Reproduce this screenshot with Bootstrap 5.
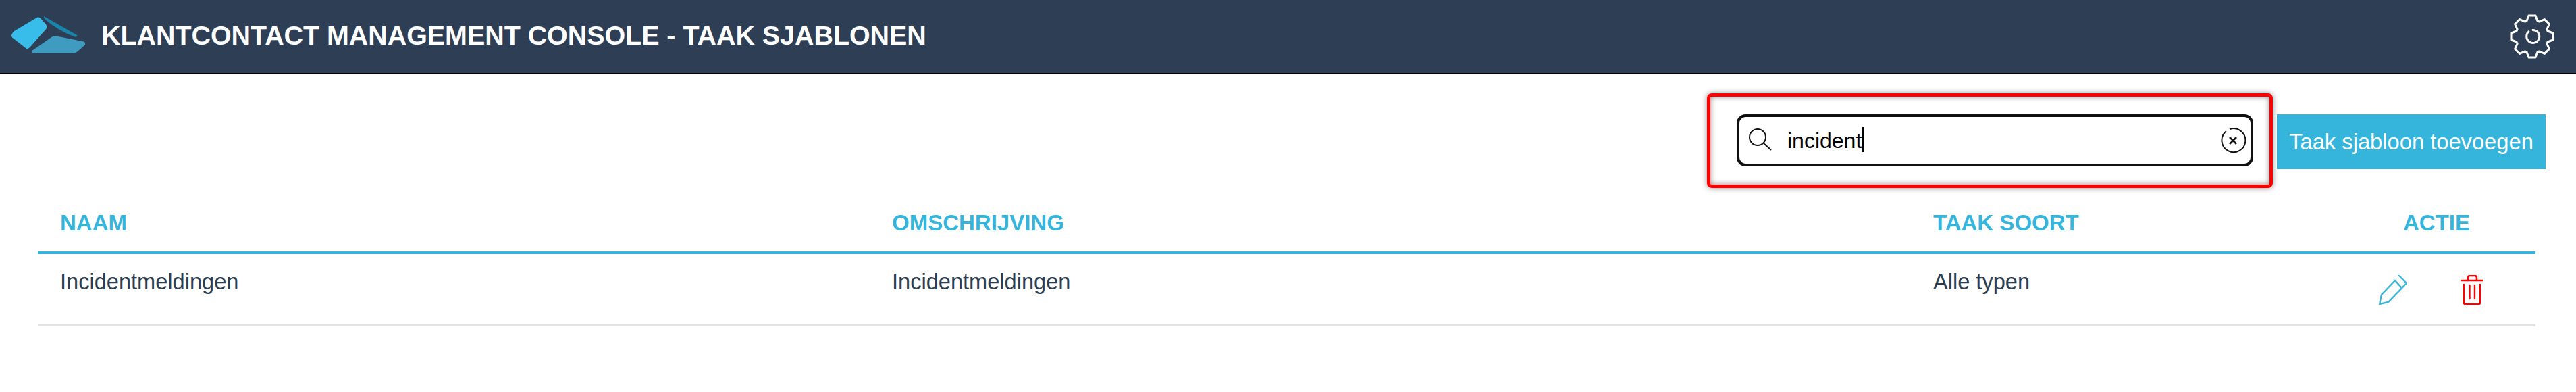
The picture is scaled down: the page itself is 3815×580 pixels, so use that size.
<!DOCTYPE html>
<html lang="nl">
<head>
    <meta charset="UTF-8">
    <meta name="viewport" content="width=device-width, initial-scale=1.0">
    <title>Taak sjablonen</title>
    <link href="https://cdn.jsdelivr.net/npm/bootstrap@5.3.0/dist/css/bootstrap.min.css" rel="stylesheet">
    <style>
        body { font-family: "Liberation Sans", Arial, sans-serif; font-size: 32px; color: #2c3e50; background: #fff; }
        .top-bar { height: 110px; background: #2d3e55; border-bottom: 2px solid #000; padding: 0 32px 0 17px; }
        .top-logo { width: 110px; height: 55px; margin-top: -6px; }
        .top-title { font-size: 39.4px; font-weight: 700; color: #fff; margin: -2px 0 0 23px; line-height: 1; }
        .top-gear { width: 66px; height: 66px; }
        .tools { padding: 28px 45px 0 0; }
        .search-mark { border: 5px solid #f00; border-radius: 7px; padding: 26px 24px 27px 39px; box-shadow: 0 0 8px rgba(0, 0, 0, .45), inset 0 0 8px rgba(0, 0, 0, .45); }
        .search-box { width: 765px; height: 77px; border: 4px solid #111; border-radius: 13px; padding: 0 7px 0 14px; background: #fff; }
        .search-input { width: 100%; border: 0; outline: 0; padding: 0; margin-left: 21px; font-size: 32px; color: #000; background: transparent; }
        .search-caret { position: absolute; left: 182px; top: 15px; width: 2px; height: 37px; background: #000; }
        .add-btn { width: 398px; height: 81px; margin: 31px 0 0 6px; padding: 0; border: 0; border-radius: 0; background: #36b5dc; color: #fff; font-size: 32.7px; }
        .add-btn:hover { background: #36b5dc; color: #fff; }
        .task-wrap { padding: 0 60px 0 56px; margin-top: 33px; }
        .task-table { table-layout: fixed; width: 3699px; margin: 0; }
        .task-table th { padding: 0 34px 24px 33px; font-size: 33px; font-weight: 700; line-height: 37px; color: #36b5dc; text-transform: uppercase; border-bottom: 4px solid #36b5dc; }
        .task-table td { height: 107px; padding: 22px 34px 0 33px; font-size: 32.6px; line-height: 37px; color: #2c3e50; vertical-align: top; border-bottom: 3px solid #e3e3e3; }
        .col-name { width: 1232px; }
        .col-desc { width: 1542px; }
        .col-kind { width: 633px; }
        .col-action { width: 292px; }
        .task-table .act-cell { padding: 31px 0 0; }
        .act-icons { gap: 79px; padding-left: 60px; }
        .act-pencil { width: 42px; height: 44px; }
        .act-trash { width: 34px; height: 45px; }
    </style>
</head>
<body>
    <nav class="top-bar d-flex align-items-center">
        <svg class="top-logo flex-shrink-0" viewBox="0 0 110 55">
            <path fill="#38bdeb" d="M38 1.7Q40 1 42.3 2.3L51 12Q53 15 51.3 19L28 45Q25 49 22.3 48L1.3 31.7Q-.7 29 .3 27.3Q1.5 24.5 3.7 22.3Z"/>
            <path fill="#1a85ab" d="M48 0L97 28Q98.5 30 94.7 30.7Q70 22 51 5.7Q47 2 48 0Z"/>
            <path fill="#3f9bc0" d="M64.7 29L107 37.5Q110 39 109 42.3L98 52Q95 54.7 91.3 54.7L33 54.7Q29.5 53.5 30.7 50.7L59.7 30.7Q62 29 64.7 29Z"/>
        </svg>
        <h1 class="top-title">KLANTCONTACT MANAGEMENT CONSOLE - TAAK SJABLONEN</h1>
        <svg class="top-gear ms-auto" viewBox="0 0 66 66" fill="none" stroke="#fff" stroke-width="3" stroke-linejoin="round">
            <path d="M25 10L28 2H38L41 10L43.6 11.1L51.4 7.6L58.4 14.6L54.9 22.4L56 25L64 28V38L56 41L54.9 43.6L58.4 51.4L51.4 58.4L43.6 54.9L41 56L38 64H28L25 56L22.4 54.9L14.6 58.4L7.6 51.4L11.1 43.6L10 41L2 38V28L10 25L11.1 22.4L7.6 14.6L14.6 7.6L22.4 11.1Z"/>
            <path d="M29 25A9.5 9.5 0 1 0 33 23.5"/>
        </svg>
    </nav>

    <div class="tools d-flex justify-content-end align-items-start">
        <div class="search-mark">
            <div class="search-box d-flex align-items-center position-relative">
                <svg class="flex-shrink-0" width="36" height="36" viewBox="0 0 36 36" fill="none" stroke="#111" stroke-width="2">
                    <circle cx="13" cy="13" r="12"/>
                    <path d="M22 22L33 32"/>
                </svg>
                <input class="search-input" type="text" value="incident" aria-label="Zoeken">
                <span class="search-caret"></span>
                <svg class="flex-shrink-0" width="38" height="38" viewBox="0 0 38 38" fill="none" stroke="#111">
                    <path stroke-width="2" d="M9 5A17.5 17.5 0 1 0 14 2.2"/>
                    <path stroke-width="2.6" d="M14 14L24 24M24 14L14 24"/>
                </svg>
            </div>
        </div>
        <button class="btn add-btn" type="button">Taak sjabloon toevoegen</button>
    </div>

    <div class="task-wrap">
        <table class="table task-table">
            <thead>
                <tr>
                    <th class="col-name">Naam</th>
                    <th class="col-desc">Omschrijving</th>
                    <th class="col-kind">Taak soort</th>
                    <th class="col-action text-center">Actie</th>
                </tr>
            </thead>
            <tbody>
                <tr>
                    <td>Incidentmeldingen</td>
                    <td>Incidentmeldingen</td>
                    <td>Alle typen</td>
                    <td class="act-cell">
                        <div class="act-icons d-flex">
                            <svg class="act-pencil" viewBox="0 0 42 44" fill="none" stroke="#36b5dc" stroke-width="2.4" stroke-linejoin="round" stroke-linecap="round">
                                <path d="M24 8L4 29L1 43L14 40L41 12L30 1"/>
                                <path d="M24 8L34 19"/>
                            </svg>
                            <svg class="act-trash" viewBox="0 0 34 45" fill="none" stroke="#f00" stroke-width="2.4" stroke-linejoin="round" stroke-linecap="round">
                                <path d="M1 8H33"/>
                                <path d="M5 14V41Q5 43 7 43H27Q29 43 29 41V14"/>
                                <path d="M11 8V4Q11 1 14 1H21Q24 1 24 4V8"/>
                                <path d="M13.5 15V35M21 15V35"/>
                            </svg>
                        </div>
                    </td>
                </tr>
            </tbody>
        </table>
    </div>
    <script src="https://cdn.jsdelivr.net/npm/bootstrap@5.3.0/dist/js/bootstrap.bundle.min.js"></script>
</body>
</html>
